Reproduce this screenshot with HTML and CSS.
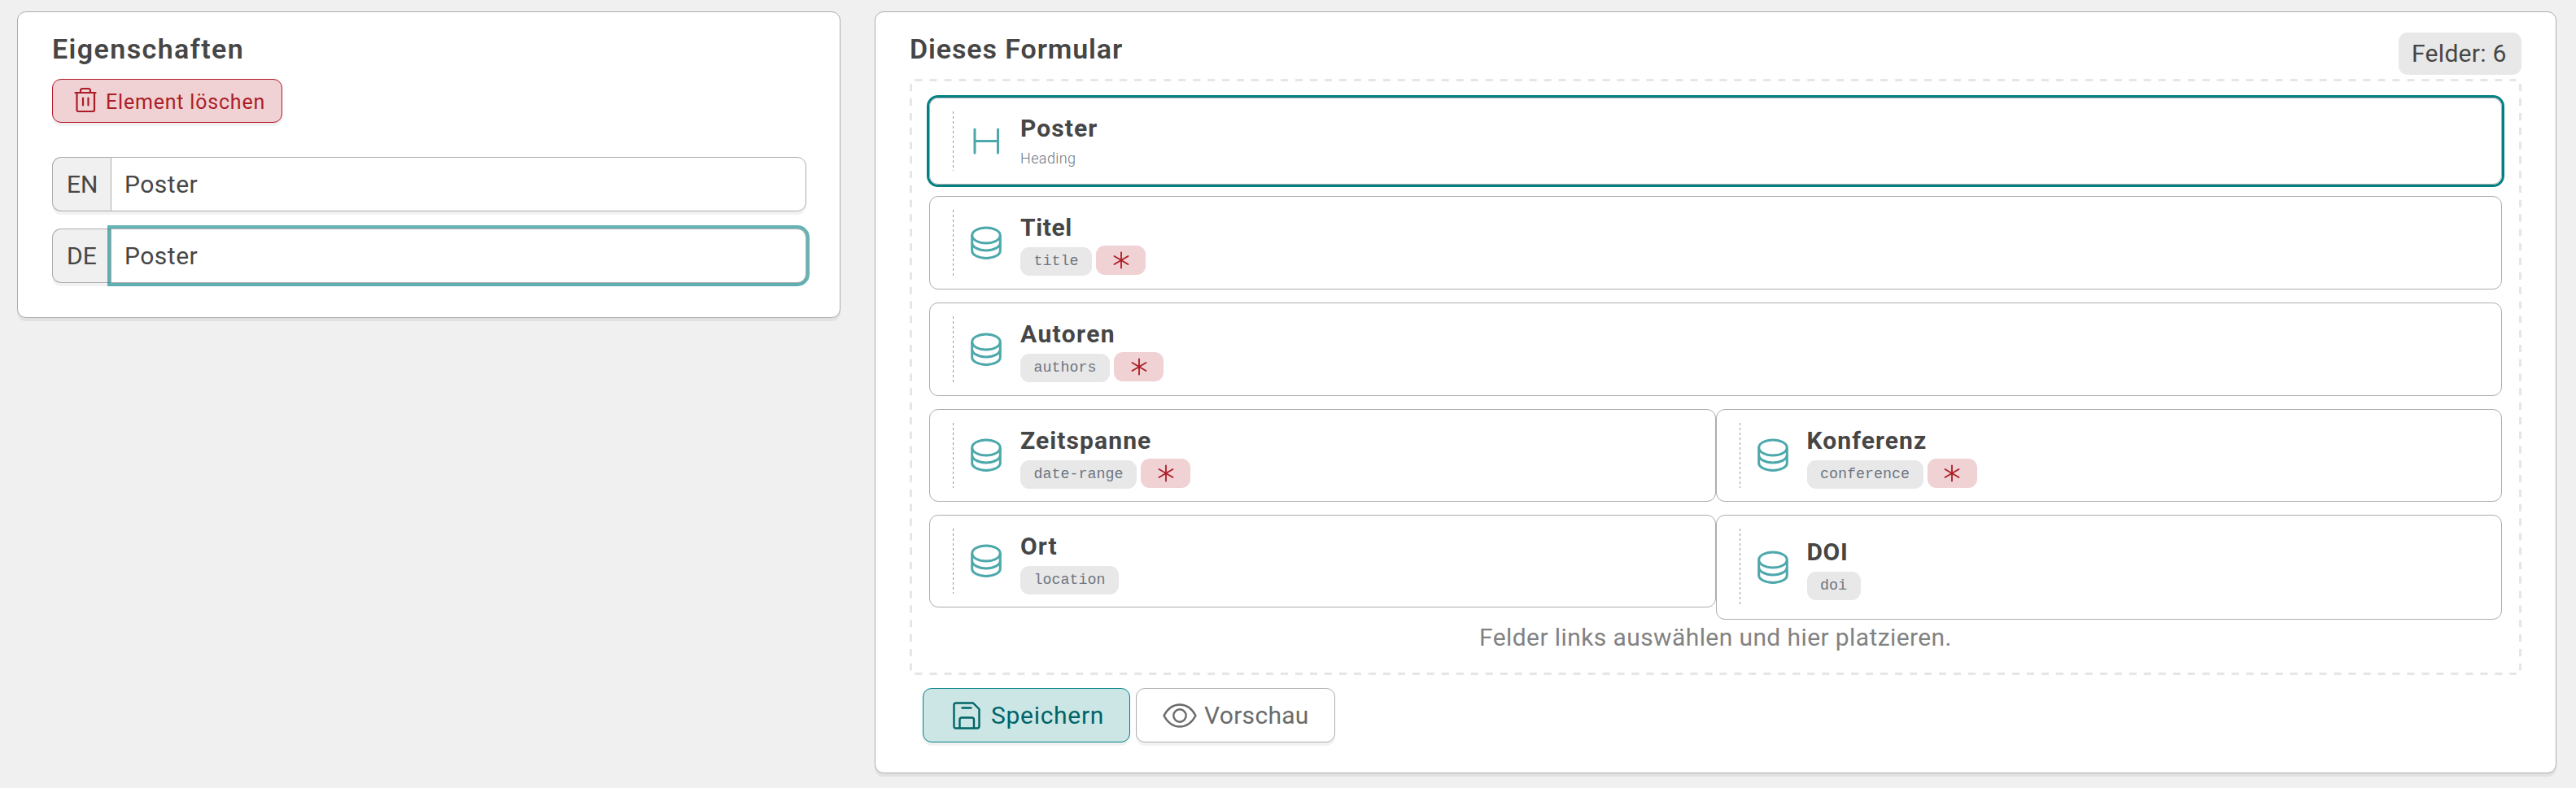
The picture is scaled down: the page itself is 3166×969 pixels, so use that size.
FILE: index.html
```html
<!DOCTYPE html>
<html lang="de">
<head>
<meta charset="utf-8">
<title>Formular</title>
<link rel="stylesheet" href="styles.css">
</head>
<body>
<svg class="defs" width="0" height="0">
  <symbol id="db" viewBox="0 0 40 42"><g fill="none" stroke="currentColor" stroke-width="3"><ellipse cx="20" cy="11.5" rx="17.3" ry="9.5"/><path d="M2.7 11.500V30.200C2.700 35.400 10.400 39.400 20 39.400S37.300 35.400 37.300 30.200V11.500M2.700 20.500C2.700 25.700 10.400 29.900 20 29.900S37.300 25.700 37.300 20.500"/></g></symbol>
  <symbol id="ast" viewBox="0 0 20 22"><path d="M10 1.500V20.500M1.500 6L18.500 16M18.500 6L1.500 16" fill="none" stroke="currentColor" stroke-width="1.800" stroke-linecap="round"/></symbol>
</svg>
<main class="page">
  <section class="card props">
    <h2 class="heading wide">Eigenschaften</h2>
    <button class="btn danger"><svg class="i-trash" viewBox="0 0 28 32"><path d="M1.500 7H26.500M8 6.500V4.500Q8 2 10.500 2H17.500Q20 2 20 4.500V6.500M3.500 7V28Q3.500 30 5.500 30H23Q25 30 25 28V7M11 13.500V22.500M17.500 13.500V22.500" fill="none" stroke="currentColor" stroke-width="2.200" stroke-linecap="round"/></svg><span>Element löschen</span></button>
    <div class="inputs">
      <div class="group"><span class="lang">EN</span><div class="input">Poster</div></div>
      <div class="group"><span class="lang">DE</span><div class="input focus">Poster</div></div>
    </div>
  </section>
  <section class="card form">
    <header class="form-head"><h2 class="heading">Dieses Formular</h2><span class="count">Felder: 6</span></header>
    <div class="drop">
      <svg class="dashes" viewBox="0 0 1981 733" fill="none" stroke="#e5e5ea" stroke-width="3"><path d="M6.500 1.500H1974.500M6.500 731.500H1974.500" stroke-dasharray="9 8.980"/><path d="M1.500 6.300V727.500M1979.500 6.300V727.500" stroke-dasharray="9 8.810"/></svg>
      <div class="item selected"><i class="grip"></i><svg class="i-head" viewBox="0 0 40 42"><path d="M6 6V35M34.500 6V35M6 20.500H34.500" fill="none" stroke="currentColor" stroke-width="3" stroke-linecap="round"/></svg><div class="body"><b class="name">Poster</b><span class="sub">Heading</span></div></div>
      <div class="item"><i class="grip"></i><svg class="i-db"><use href="#db"/></svg><div class="body"><b class="name snug">Titel</b><div class="tags"><code>title</code><em><svg><use href="#ast"/></svg></em></div></div></div>
      <div class="item"><i class="grip"></i><svg class="i-db"><use href="#db"/></svg><div class="body"><b class="name loose">Autoren</b><div class="tags"><code>authors</code><em><svg><use href="#ast"/></svg></em></div></div></div>
      <div class="row">
        <div class="item short"><i class="grip"></i><svg class="i-db"><use href="#db"/></svg><div class="body"><b class="name">Zeitspanne</b><div class="tags"><code>date-range</code><em><svg><use href="#ast"/></svg></em></div></div></div>
        <div class="item short"><i class="grip"></i><svg class="i-db"><use href="#db"/></svg><div class="body"><b class="name">Konferenz</b><div class="tags"><code>conference</code><em><svg><use href="#ast"/></svg></em></div></div></div>
      </div>
      <div class="row">
        <div class="item short"><i class="grip"></i><svg class="i-db"><use href="#db"/></svg><div class="body"><b class="name">Ort</b><div class="tags"><code>location</code></div></div></div>
        <div class="item tall"><i class="grip"></i><svg class="i-db"><use href="#db"/></svg><div class="body"><b class="name snug">DOI</b><div class="tags"><code>doi</code></div></div></div>
      </div>
      <p class="hint">Felder links auswählen und hier platzieren.</p>
    </div>
    <div class="actions">
      <button class="btn save"><svg class="i-save" viewBox="0 0 34 34"><path d="M4 1.500H25L32.500 9V30Q32.500 32.500 30 32.500H4Q1.500 32.500 1.500 30V4Q1.500 1.500 4 1.500ZM8.500 32V22Q8.500 19.500 11 19.500H23.500Q26 19.500 26 22V32M11.500 7.500H22.500" fill="none" stroke="currentColor" stroke-width="2.400" stroke-linecap="round" stroke-linejoin="round"/></svg><span>Speichern</span></button>
      <button class="btn preview"><svg class="i-eye" viewBox="0 0 42 30"><path d="M1.500 15C6 6.500 13 1.500 21 1.500S36 6.500 40.500 15C36 23.500 29 28.500 21 28.500S6 23.500 1.500 15Z" fill="none" stroke="currentColor" stroke-width="2.400" stroke-linejoin="round"/><circle cx="21" cy="15" r="7.700" fill="none" stroke="currentColor" stroke-width="2.400"/></svg><span>Vorschau</span></button>
    </div>
  </section>
</main>
</body>
</html>
```
FILE: styles.css
```css
* { box-sizing: border-box; }
body { margin: 0; background: #f0f0f0; color: #464646; font: 30px/36px Roboto, "Liberation Sans", sans-serif; }
.defs { position: absolute; }
.page { display: flex; align-items: flex-start; gap: 42px; padding: 14px 24px 0 21px; height: 969px; }
.card { background: #fff; border: 1px solid #adadad; border-radius: 11px; box-shadow: 0 4px 0 rgba(0, 0, 0, .06); padding: 0 42px; }
.props { width: 1012px; height: 377px; }
.form { flex: 1; height: 937px; }
.heading { margin: 0; padding-top: 24px; height: 82px; font-size: 34px; line-height: 42px; font-weight: 600; letter-spacing: .9px; white-space: nowrap; }
.wide { letter-spacing: 1.4px; }
.btn { display: flex; align-items: center; font: inherit; border: 1px solid; border-radius: 11px; box-shadow: 0 4px 0 rgba(0, 0, 0, .05); white-space: nowrap; padding: 0; }
.danger { width: 283px; height: 54px; background: #f0d1d4; border-color: #b5162b; color: #ab1d26; font-size: 25px; padding-left: 26px; letter-spacing: .8px; }
.danger span { padding-top: 3px; }
.i-trash { width: 28px; height: 32px; margin-right: 11px; margin-bottom: 2px; }
.inputs { display: grid; gap: 21px; margin-top: 42px; }
.group { display: flex; height: 67px; border-radius: 11px; box-shadow: 0 4px 0 rgba(0, 0, 0, .05); }
.lang { width: 72px; border: 1px solid #adadad; border-right: 0; border-radius: 11px 0 0 11px; background: #f0f0f0; padding: 15px 0 0 17px; }
.input { flex: 1; border: 1px solid #adadad; border-radius: 0 11px 11px 0; padding: 15px 0 0 16px; background: #fff; letter-spacing: .5px; }
.props .group { margin-right: -1px; }
.focus { box-shadow: 0 0 0 4px rgba(0, 128, 131, .6); }
.form-head { display: flex; justify-content: space-between; }
.count { height: 52px; margin-top: 25px; width: 151px; border-radius: 11px; background: #e8e8e8; padding: 8px 0 0 16px; white-space: nowrap; letter-spacing: .3px; }
.drop { position: relative; height: 733px; padding: 23px 24px 0; }
.dashes { position: absolute; inset: 0; width: 100%; height: 100%; }
.item { display: flex; align-items: center; height: 115px; border: 1px solid #adadad; border-radius: 11px; margin-bottom: 16px; padding: 16px 0 16px 28px; }
.selected { height: 107px; margin-bottom: 14px; box-shadow: 0 0 0 3px #008083; }
.grip { align-self: stretch; width: 1px; background: repeating-linear-gradient(#999 0 3px, transparent 3px 6px); margin-right: 20px; }
.i-db, .i-head { width: 40px; height: 42px; color: #4da8ab; margin-right: 22px; flex: none; }
.body { display: flex; flex-direction: column; }
.name { font-weight: 700; line-height: 36px; white-space: nowrap; letter-spacing: 1.100px; }
.snug { letter-spacing: .6px; }
.loose { letter-spacing: 1.400px; }
.sub { font-size: 18px; line-height: 24px; font-weight: 300; color: #6e7582; margin-top: 7px; letter-spacing: .4px; }
.tags { display: flex; gap: 5px; height: 37px; margin: 4px 0 -4px; }
code { font: 18.330px/35px "Liberation Mono", monospace; height: 35px; margin-top: 2px; padding: 0 16.500px; border-radius: 11px; background: #e8e8e8; color: #6e7582; }
em { width: 61px; height: 36px; border-radius: 11px; background: #f0d1d4; color: #ab1d26; display: grid; place-items: center; }
em svg { width: 20px; height: 22px; }
.row { display: flex; align-items: flex-start; height: 130px; }
.row + .row { height: 133px; }
.row .item { flex: 1; }
.row .short { height: 114px; }
.row .tall { height: 129px; }
.hint { margin: 0; text-align: center; color: #828282; letter-spacing: .4px; }
.actions { display: flex; gap: 7px; padding: 16px 0 0 16px; }
.save { width: 255px; height: 67px; background: #cce6e6; border-color: #008083; color: #006466; padding-left: 36px; letter-spacing: .7px; }
.preview { width: 245px; height: 67px; background: #fff; border-color: #adadad; color: #6b6b6b; padding-left: 32px; letter-spacing: .3px; }
.i-save { width: 34px; height: 38px; margin-right: 13px; }
.i-eye { width: 42px; height: 30px; margin-right: 9px; }
```
